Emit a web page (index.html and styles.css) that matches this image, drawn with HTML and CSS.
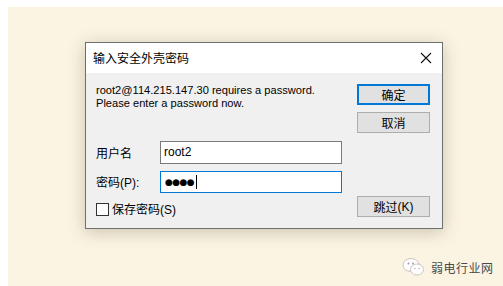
FILE: index.html
```html
<!DOCTYPE html>
<html>
<head>
<meta charset="utf-8">
<link rel="stylesheet" href="styles.css">
</head>
<body>
<div class="stage">
  <div class="dialog">
    <div class="titlebar">
      <span class="title">输入安全外壳密码</span>
      <svg class="close" width="12" height="12" viewBox="0 0 12 12"><path d="M1 1 L11 11 M11 1 L1 11" stroke="#111" stroke-width="1.1" fill="none"/></svg>
    </div>
    <div class="content">
      <div class="left">
        <div class="msg">root2@114.215.147.30 requires a password.<br>Please enter a password now.</div>
        <div class="row r1">
          <span class="label">用户名</span>
          <div class="input">root2</div>
        </div>
        <div class="row r2">
          <span class="label">密码<span class="lat">(P):</span></span>
          <div class="input focus"><span class="dots">●●●●</span><span class="caret"></span></div>
        </div>
        <div class="check">
          <span class="box"></span>
          <span class="clabel">保存密码<span class="lat">(S)</span></span>
        </div>
      </div>
      <div class="right">
        <div class="btn primary">确定</div>
        <div class="btn second">取消</div>
        <div class="btn skip">跳过<span class="lat">(K)</span></div>
      </div>
    </div>
  </div>
  <div class="watermark">
    <svg width="26" height="20" viewBox="0 0 26 20">
      <ellipse cx="10" cy="8" rx="8" ry="6.5" fill="#fff" stroke="#c9c5bc" stroke-width="1"/>
      <ellipse cx="16" cy="12.5" rx="6.5" ry="5.5" fill="#fff" stroke="#c9c5bc" stroke-width="1"/>
      <circle cx="7.5" cy="6.5" r="0.9" fill="#999"/>
      <circle cx="12" cy="6.5" r="0.9" fill="#999"/>
      <circle cx="14" cy="11.5" r="0.7" fill="#aaa"/>
      <circle cx="18" cy="11.5" r="0.7" fill="#aaa"/>
    </svg>
    <span class="wtext">弱电行业网</span>
  </div>
</div>
</body>
</html>
```
FILE: styles.css
```css
html, body {
  margin: 0;
  padding: 0;
  background: #ffffff;
}
body {
  width: 503px;
  height: 286px;
  overflow: hidden;
}
.stage {
  margin: 7px 0 0 8px;
  height: 279px;
  background: #fbf4e2;
  padding: 35px 0 0 77px;
  box-sizing: border-box;
  position: relative;
  font-family: "Noto Sans CJK SC", sans-serif;
}
.dialog {
  width: 358px;
  height: 187px;
  box-sizing: border-box;
  border: 1px solid #6f6f6f;
  background: #f0f0f0;
  box-shadow: 0 3px 16px rgba(80, 70, 40, 0.28);
  display: flex;
  flex-direction: column;
}
.titlebar {
  height: 30px;
  background: #ffffff;
  display: flex;
  align-items: center;
  justify-content: space-between;
  padding: 0 10px 0 7px;
  flex: none;
}
.title {
  font-size: 12px;
  color: #000;
  line-height: 14px;
  margin-top: -1px;
}
.close {
  display: block;
}
.content {
  flex: 1;
  display: flex;
  justify-content: space-between;
  padding: 11px 12px 0 10px;
}
.left {
  width: 246px;
}
.msg {
  font-family: "Liberation Sans", Arial, sans-serif;
  font-size: 11.1px;
  line-height: 13px;
  color: #000;
  height: 57px;
}
.lat {
  font-family: "Liberation Sans", Arial, sans-serif;
  font-size: 12px;
}
.row {
  display: flex;
  align-items: center;
}
.r2 {
  margin-top: 7px;
}
.label {
  width: 64px;
  font-size: 12px;
  color: #000;
  line-height: 14px;
}
.input {
  width: 182px;
  height: 23px;
  box-sizing: border-box;
  border: 1px solid #7a7a7a;
  background: #fff;
  font-family: "Liberation Sans", Arial, sans-serif;
  font-size: 12px;
  line-height: 14px;
  padding: 3px 0 0 3px;
  color: #000;
}
.input.focus {
  border-color: #0078d7;
  height: 22px;
  padding: 3px 0 0 4px;
  display: flex;
  align-items: flex-start;
}
.dots {
  font-family: "DejaVu Sans", sans-serif;
  font-size: 9px;
  letter-spacing: -0.6px;
  line-height: 14px;
}
.caret {
  display: inline-block;
  width: 1px;
  height: 14px;
  background: #000;
  margin-left: 2px;
}
.check {
  display: flex;
  align-items: center;
  margin-top: 9px;
}
.box {
  width: 13px;
  height: 13px;
  box-sizing: border-box;
  border: 1px solid #333;
  background: #fff;
  margin-right: 3px;
}
.clabel {
  font-size: 12px;
  line-height: 14px;
  color: #000;
}
.right {
  width: 73px;
  display: flex;
  flex-direction: column;
}
.btn {
  height: 21px;
  box-sizing: border-box;
  border: 1px solid #adadad;
  background: #e1e1e1;
  font-size: 12px;
  display: flex;
  align-items: center;
  justify-content: center;
  color: #000;
}
.btn.primary {
  border: 2px solid #0078d7;
}
.btn.second {
  margin-top: 7px;
}
.btn.skip {
  margin-top: 63px;
}
.watermark {
  position: absolute;
  left: 393px;
  top: 250px;
  display: flex;
  align-items: center;
  gap: 4px;
}
.wtext {
  font-size: 12px;
  color: #4a4a4a;
  letter-spacing: 0.5px;
}
```
